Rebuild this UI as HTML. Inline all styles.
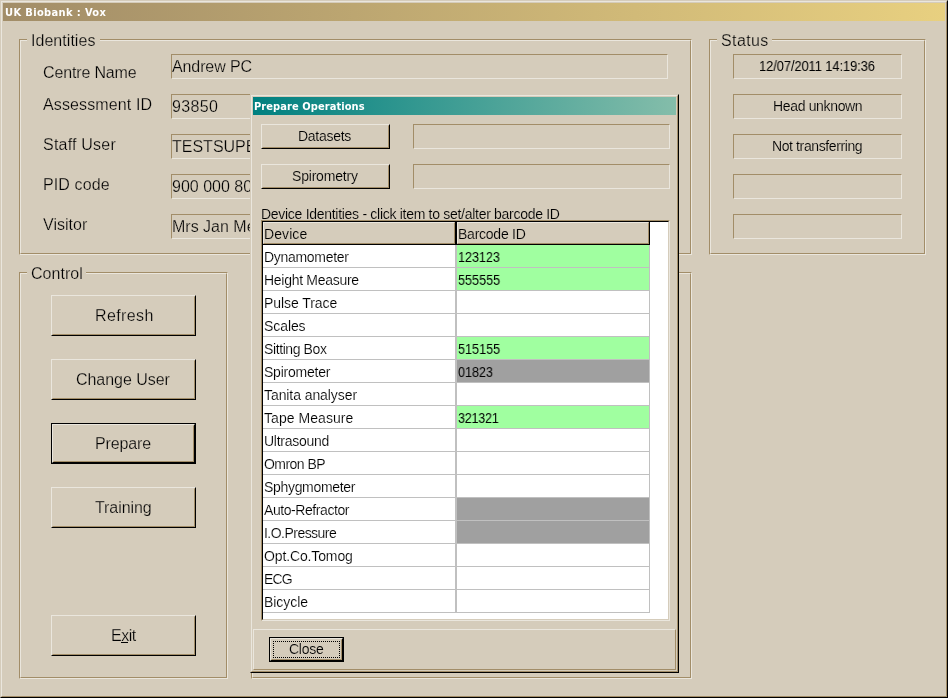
<!DOCTYPE html>
<html><head><meta charset="utf-8"><title>UK Biobank : Vox</title>
<style>
html,body{margin:0;padding:0;}
body{width:948px;height:698px;overflow:hidden;background:#D5CCBB;font-family:"Liberation Sans",Arial,sans-serif;color:#000;position:relative;}
.a{position:absolute;box-sizing:border-box;}
.t{position:absolute;white-space:nowrap;line-height:1;will-change:transform;}
.f16{font-size:16px;-webkit-text-stroke:0.25px #D5CCBB;}
.f13{font-size:14px;letter-spacing:-0.28px;-webkit-text-stroke:0.15px #D5CCBB;}
.onw{-webkit-text-stroke-color:#fff;}
.ong{-webkit-text-stroke-color:#A0FFA0;}
.onx{-webkit-text-stroke-color:#A0A0A0;}
.ft{font-family:"DejaVu Sans Condensed","DejaVu Sans","Liberation Sans",sans-serif;font-weight:bold;font-size:11px;color:#fff;}
.win{border-style:solid;border-width:1px;border-color:#D5CCBB #000000 #000000 #D5CCBB;}
.win>.in{position:absolute;left:0;top:0;right:0;bottom:0;border-style:solid;border-width:1px;border-color:#EAE6DD #A28D68 #A28D68 #EAE6DD;}
.gb{border-style:solid;border-width:1px;border-color:#A28D68 #EAE6DD #EAE6DD #A28D68;}
.gb>.in{position:absolute;left:0;top:0;right:0;bottom:0;border-style:solid;border-width:1px;border-color:#EAE6DD #A28D68 #A28D68 #EAE6DD;}
.gl{background:#D5CCBB;}
.sunk{border-style:solid;border-width:1px;border-color:#A28D68 #EAE6DD #EAE6DD #A28D68;}
.clip{overflow:hidden;}
.btn{border-style:solid;border-width:1px;border-color:#EAE6DD #000000 #000000 #EAE6DD;}
.btn>.in{position:absolute;left:0;top:0;right:0;bottom:0;border-style:solid;border-width:1px;border-color:#D5CCBB #A28D68 #A28D68 #D5CCBB;}
.def{border:1px solid #000000;}
.raised{border-style:solid;border-width:1px;border-color:#EAE6DD #A28D68 #A28D68 #EAE6DD;}
.grid{border-style:solid;border-width:1px;border-color:#A28D68 #EAE6DD #EAE6DD #A28D68;background:#fff;}
.grid>.in{position:absolute;left:0;top:0;right:0;bottom:0;border-style:solid;border-width:1px;border-color:#000000 #D5CCBB #D5CCBB #000000;}
.hc{background:#D5CCBB;border-style:solid;border-width:1px;border-color:#EAE6DD #A28D68 #A28D68 #EAE6DD;}
u{text-decoration:none;}
</style></head>
<body>
<div class="a win" style="left:0px;top:0px;width:948px;height:698px;"><div class="in"></div></div>
<div class="a " style="left:3px;top:3px;width:942px;height:18px;background:linear-gradient(to right,#A28D68,#E8D080);"></div>
<div id="t1" class="t ft" style="left:5.2px;top:7px;letter-spacing:0.37px;">UK Biobank : Vox</div>
<div class="a gb" style="left:19px;top:39px;width:673px;height:216px;"><div class="in"></div></div>
<div class="a gl" style="left:27px;top:39px;width:73px;height:2px;"></div>
<div id="t2" class="t f16" style="left:31.0px;top:33px;letter-spacing:0.04px;">Identities</div>
<div id="t3" class="t f16" style="left:43.0px;top:65px;letter-spacing:-0.15px;">Centre Name</div>
<div id="t4" class="t f16" style="left:43.0px;top:97px;letter-spacing:0.12px;">Assessment ID</div>
<div id="t5" class="t f16" style="left:43.0px;top:137px;letter-spacing:0.21px;">Staff User</div>
<div id="t6" class="t f16" style="left:43.0px;top:177px;letter-spacing:0.12px;">PID code</div>
<div id="t7" class="t f16" style="left:43.0px;top:217px;letter-spacing:0.02px;">Visitor</div>
<div class="a sunk" style="left:171px;top:54px;width:497px;height:25px;"></div>
<div class="a clip" style="left:172px;top:55px;width:495px;height:23px;"><div id="t8" class="t f16" style="left:0.0px;top:4px;letter-spacing:-0.11px;">Andrew PC</div></div>
<div class="a sunk" style="left:171px;top:94px;width:497px;height:25px;"></div>
<div class="a clip" style="left:172px;top:95px;width:495px;height:23px;"><div id="t9" class="t f16" style="left:0.0px;top:4px;letter-spacing:0.33px;">93850</div></div>
<div class="a sunk" style="left:171px;top:134px;width:497px;height:25px;"></div>
<div class="a clip" style="left:172px;top:135px;width:495px;height:23px;"><div id="t10" class="t f16" style="left:0.0px;top:4px;letter-spacing:0.0px;">TESTSUPER</div></div>
<div class="a sunk" style="left:171px;top:174px;width:497px;height:25px;"></div>
<div class="a clip" style="left:172px;top:175px;width:495px;height:23px;"><div id="t11" class="t f16" style="left:0.0px;top:4px;letter-spacing:0.0px;">900 000 800</div></div>
<div class="a sunk" style="left:171px;top:214px;width:497px;height:25px;"></div>
<div class="a clip" style="left:172px;top:215px;width:495px;height:23px;"><div id="t12" class="t f16" style="left:0.0px;top:4px;letter-spacing:0.0px;">Mrs Jan Mer</div></div>
<div class="a gb" style="left:709px;top:39px;width:217px;height:216px;"><div class="in"></div></div>
<div class="a gl" style="left:717px;top:39px;width:55px;height:2px;"></div>
<div id="t13" class="t f16" style="left:721.0px;top:33px;letter-spacing:0.38px;">Status</div>
<div class="a sunk" style="left:733px;top:54px;width:169px;height:25px;"></div>
<div id="t14" class="t f13" style="left:759.2px;top:59px;letter-spacing:-0.08px;transform:scaleX(0.92);transform-origin:0 0;-webkit-text-stroke-width:0;">12/07/2011 14:19:36</div>
<div class="a sunk" style="left:733px;top:94px;width:169px;height:25px;"></div>
<div id="t15" class="t f13" style="left:772.6px;top:99px;letter-spacing:-0.34px;">Head unknown</div>
<div class="a sunk" style="left:733px;top:134px;width:169px;height:25px;"></div>
<div id="t16" class="t f13" style="left:771.8px;top:139px;letter-spacing:-0.39px;">Not transferring</div>
<div class="a sunk" style="left:733px;top:174px;width:169px;height:25px;"></div>
<div class="a sunk" style="left:733px;top:214px;width:169px;height:25px;"></div>
<div class="a gb" style="left:19px;top:272px;width:209px;height:407px;"><div class="in"></div></div>
<div class="a gl" style="left:27px;top:272px;width:59px;height:2px;"></div>
<div id="t17" class="t f16" style="left:31.0px;top:266px;letter-spacing:0.05px;">Control</div>
<div class="a gb" style="left:251px;top:272px;width:441px;height:407px;"><div class="in"></div></div>
<div class="a btn" style="left:51px;top:295px;width:145px;height:41px;"><div class="in"></div></div>
<div id="t18" class="t f16" style="left:94.6px;top:308px;letter-spacing:0.38px;">Refresh</div>
<div class="a btn" style="left:51px;top:359px;width:145px;height:41px;"><div class="in"></div></div>
<div id="t19" class="t f16" style="left:76.0px;top:372px;letter-spacing:-0.04px;">Change User</div>
<div class="a def" style="left:51px;top:423px;width:145px;height:41px;"></div>
<div class="a btn" style="left:52px;top:424px;width:143px;height:39px;"><div class="in"></div></div>
<div id="t20" class="t f16" style="left:94.6px;top:436px;letter-spacing:-0.12px;">Prepare</div>
<div class="a btn" style="left:51px;top:487px;width:145px;height:41px;"><div class="in"></div></div>
<div id="t21" class="t f16" style="left:95.0px;top:500px;letter-spacing:-0.07px;">Training</div>
<div class="a btn" style="left:51px;top:615px;width:145px;height:41px;"><div class="in"></div></div>
<div id="t22" class="t f16" style="left:110.6px;top:628px;letter-spacing:-0.53px;">E<u>x</u>it</div>
<div class="a " style="left:121px;top:642px;width:7px;height:1px;background:#000;"></div>
<div class="a win" style="left:250px;top:94px;width:429px;height:579px;background:#D5CCBB;"><div class="in"></div></div>
<div class="a " style="left:253px;top:97px;width:423px;height:18px;background:linear-gradient(to right,#008080,#84BDAA);"></div>
<div id="t23" class="t ft" style="left:254.2px;top:101px;letter-spacing:0.08px;">Prepare Operations</div>
<div class="a btn" style="left:261px;top:124px;width:129px;height:25px;"><div class="in"></div></div>
<div id="t24" class="t f13" style="left:297.6px;top:129px;letter-spacing:-0.27px;">Datasets</div>
<div class="a btn" style="left:261px;top:164px;width:129px;height:25px;"><div class="in"></div></div>
<div id="t25" class="t f13" style="left:292.2px;top:169px;letter-spacing:-0.2px;">Spirometry</div>
<div class="a sunk" style="left:413px;top:124px;width:257px;height:25px;"></div>
<div class="a sunk" style="left:413px;top:164px;width:257px;height:25px;"></div>
<div id="t26" class="t f13" style="left:260.8px;top:207px;letter-spacing:-0.29px;">Device Identities - click item to set/alter barcode ID</div>
<div class="a grid" style="left:261px;top:220px;width:409px;height:401px;"><div class="in"></div></div>
<div class="a hc" style="left:263px;top:222px;width:192px;height:22px;"></div>
<div class="a hc" style="left:457px;top:222px;width:192px;height:22px;"></div>
<div class="a " style="left:455px;top:222px;width:2px;height:23px;background:#000000;"></div>
<div class="a " style="left:649px;top:222px;width:1px;height:23px;background:#000000;"></div>
<div class="a " style="left:263px;top:244px;width:387px;height:1px;background:#000000;"></div>
<div id="t27" class="t f13" style="left:264.0px;top:227px;letter-spacing:0.08px;">Device</div>
<div id="t28" class="t f13" style="left:458.0px;top:227px;letter-spacing:-0.24px;">Barcode ID</div>
<div class="a " style="left:457px;top:245px;width:192px;height:22px;background:#A0FFA0;"></div>
<div class="a " style="left:263px;top:267px;width:387px;height:1px;background:#C0C0C0;"></div>
<div id="t29" class="t f13 onw" style="left:264.0px;top:250px;letter-spacing:-0.3px;">Dynamometer</div>
<div id="t30" class="t f13 ong" style="left:458.0px;top:250px;letter-spacing:-0.06px;transform:scaleX(0.9);transform-origin:0 0;-webkit-text-stroke-width:0;">123123</div>
<div class="a " style="left:457px;top:268px;width:192px;height:22px;background:#A0FFA0;"></div>
<div class="a " style="left:263px;top:290px;width:387px;height:1px;background:#C0C0C0;"></div>
<div id="t31" class="t f13 onw" style="left:264.0px;top:273px;letter-spacing:-0.29px;">Height Measure</div>
<div id="t32" class="t f13 ong" style="left:458.0px;top:273px;letter-spacing:0.02px;transform:scaleX(0.9);transform-origin:0 0;-webkit-text-stroke-width:0;">555555</div>
<div class="a " style="left:263px;top:313px;width:387px;height:1px;background:#C0C0C0;"></div>
<div id="t33" class="t f13 onw" style="left:264.0px;top:296px;letter-spacing:-0.06px;">Pulse Trace</div>
<div class="a " style="left:263px;top:336px;width:387px;height:1px;background:#C0C0C0;"></div>
<div id="t34" class="t f13 onw" style="left:264.0px;top:319px;letter-spacing:-0.08px;">Scales</div>
<div class="a " style="left:457px;top:337px;width:192px;height:22px;background:#A0FFA0;"></div>
<div class="a " style="left:263px;top:359px;width:387px;height:1px;background:#C0C0C0;"></div>
<div id="t35" class="t f13 onw" style="left:264.0px;top:342px;letter-spacing:-0.4px;">Sitting Box</div>
<div id="t36" class="t f13 ong" style="left:458.0px;top:342px;letter-spacing:0.02px;transform:scaleX(0.9);transform-origin:0 0;-webkit-text-stroke-width:0;">515155</div>
<div class="a " style="left:457px;top:360px;width:192px;height:22px;background:#A0A0A0;"></div>
<div class="a " style="left:263px;top:382px;width:387px;height:1px;background:#C0C0C0;"></div>
<div id="t37" class="t f13 onw" style="left:264.0px;top:365px;letter-spacing:-0.23px;">Spirometer</div>
<div id="t38" class="t f13 onx" style="left:458.0px;top:365px;letter-spacing:-0.01px;transform:scaleX(0.9);transform-origin:0 0;-webkit-text-stroke-width:0;">01823</div>
<div class="a " style="left:263px;top:405px;width:387px;height:1px;background:#C0C0C0;"></div>
<div id="t39" class="t f13 onw" style="left:264.0px;top:388px;letter-spacing:-0.08px;">Tanita analyser</div>
<div class="a " style="left:457px;top:406px;width:192px;height:22px;background:#A0FFA0;"></div>
<div class="a " style="left:263px;top:428px;width:387px;height:1px;background:#C0C0C0;"></div>
<div id="t40" class="t f13 onw" style="left:264.0px;top:411px;letter-spacing:0.06px;">Tape Measure</div>
<div id="t41" class="t f13 ong" style="left:458.0px;top:411px;letter-spacing:-0.28px;transform:scaleX(0.9);transform-origin:0 0;-webkit-text-stroke-width:0;">321321</div>
<div class="a " style="left:263px;top:451px;width:387px;height:1px;background:#C0C0C0;"></div>
<div id="t42" class="t f13 onw" style="left:264.0px;top:434px;letter-spacing:-0.26px;">Ultrasound</div>
<div class="a " style="left:263px;top:474px;width:387px;height:1px;background:#C0C0C0;"></div>
<div id="t43" class="t f13 onw" style="left:264.0px;top:457px;letter-spacing:-0.54px;">Omron BP</div>
<div class="a " style="left:263px;top:497px;width:387px;height:1px;background:#C0C0C0;"></div>
<div id="t44" class="t f13 onw" style="left:264.0px;top:480px;letter-spacing:-0.32px;">Sphygmometer</div>
<div class="a " style="left:457px;top:498px;width:192px;height:22px;background:#A0A0A0;"></div>
<div class="a " style="left:263px;top:520px;width:387px;height:1px;background:#C0C0C0;"></div>
<div id="t45" class="t f13 onw" style="left:264.0px;top:503px;letter-spacing:-0.43px;">Auto-Refractor</div>
<div class="a " style="left:457px;top:521px;width:192px;height:22px;background:#A0A0A0;"></div>
<div class="a " style="left:263px;top:543px;width:387px;height:1px;background:#C0C0C0;"></div>
<div id="t46" class="t f13 onw" style="left:264.0px;top:526px;letter-spacing:-0.53px;">I.O.Pressure</div>
<div class="a " style="left:263px;top:566px;width:387px;height:1px;background:#C0C0C0;"></div>
<div id="t47" class="t f13 onw" style="left:264.0px;top:549px;letter-spacing:-0.13px;">Opt.Co.Tomog</div>
<div class="a " style="left:263px;top:589px;width:387px;height:1px;background:#C0C0C0;"></div>
<div id="t48" class="t f13 onw" style="left:264.0px;top:572px;letter-spacing:-0.88px;">ECG</div>
<div class="a " style="left:263px;top:612px;width:387px;height:1px;background:#C0C0C0;"></div>
<div id="t49" class="t f13 onw" style="left:264.0px;top:595px;letter-spacing:-0.05px;">Bicycle</div>
<div class="a " style="left:455px;top:245px;width:2px;height:368px;background:#C0C0C0;"></div>
<div class="a " style="left:649px;top:245px;width:1px;height:368px;background:#C0C0C0;"></div>
<div class="a raised" style="left:253px;top:629px;width:423px;height:41px;"></div>
<div class="a def" style="left:269px;top:637px;width:75px;height:25px;"></div>
<div class="a btn" style="left:270px;top:638px;width:73px;height:23px;"><div class="in"></div></div>
<div id="t50" class="t f13" style="left:289.4px;top:642px;letter-spacing:-0.26px;">Close</div>
<div class="a " style="left:273px;top:641px;width:67px;height:17px;border:1px dotted #000;"></div>
</body></html>
